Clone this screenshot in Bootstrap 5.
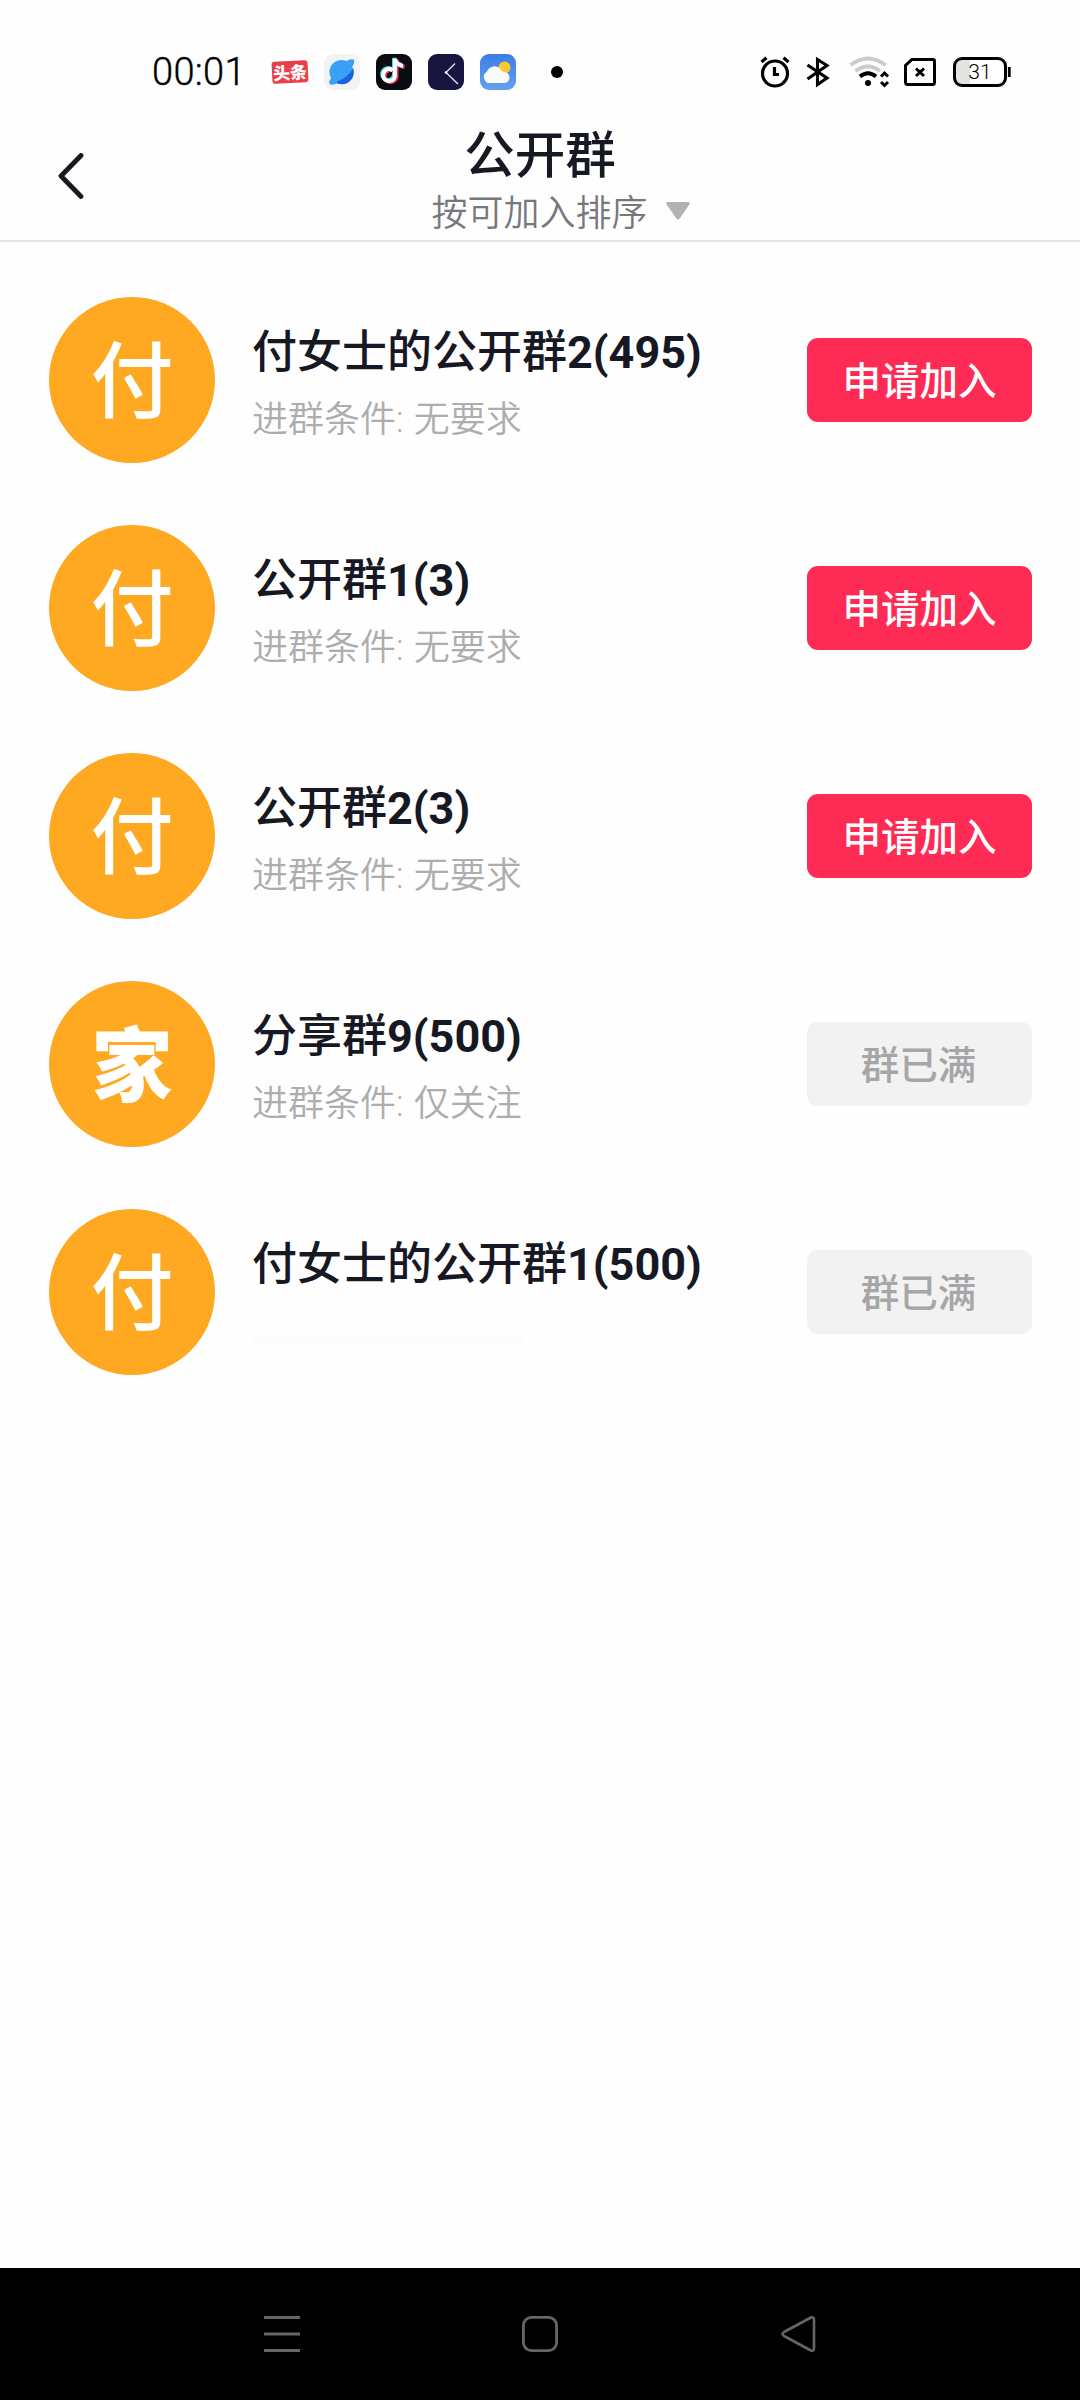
<!DOCTYPE html>
<html lang="zh-CN">
<head>
<meta charset="utf-8">
<meta name="viewport" content="width=device-width, initial-scale=1">
<title>公开群</title>
<link href="https://cdn.jsdelivr.net/npm/bootstrap@5.3.0/dist/css/bootstrap.min.css" rel="stylesheet">
<style>
  body { font-family: Roboto, "Noto Sans CJK SC", sans-serif; color: #161823; background: #fefefe; }
  svg { display: block; flex: none; }
  .phone { width: 1080px; height: 2400px; overflow: hidden; }
  .status-bar { height: 110px; padding: 54px 69px 0 152px; }
  .status-bar > div { height: 36px; }
  .clock { width: 94px; margin-right: 26px; font: 300 38px/38px Roboto, sans-serif; letter-spacing: .3px; -webkit-text-stroke: .4px #000; color: #000; white-space: nowrap; }
  .apps { gap: 16px; }
  .news-tile { width: 36px; height: 22px; border-radius: 3px; background: #e8404a; color: #fff; font: 900 17px/22px "Noto Sans CJK SC", sans-serif; transform: rotate(-3deg); }
  .dot { margin-left: 35px; }
  .title-bar { height: 132px; border-bottom: 2px solid #e3e3e4; display: grid; grid-template-columns: 1fr auto 1fr; }
  .back-btn { margin: 43px 0 0 56px; }
  .page-title { font-size: 50.500px; line-height: 60px; font-weight: 500; margin-top: 16px; }
  .sort-btn { font-size: 36px; line-height: 40px; font-weight: 350; color: #77787c; margin-top: 8px; height: 40px; padding-left: 42px; }
  .sort-btn svg { margin: -6px 0 0 17px; }
  .group-list { padding-top: 24px; }
  .group-item { height: 228px; padding: 0 48px 0 49px; background: transparent; }
  .avatar { width: 166px; height: 166px; padding-top: 4px; background: #ffa922; color: #fff; font-size: 83px; line-height: 1; font-weight: 500; flex: none; }
  .avatar.heavy { font-weight: 900; font-size: 81px; padding-top: 6px; }
  .info { margin-left: 37px; height: 130px; padding-top: 5px; }
  .group-name { font-size: 45px; line-height: 66px; font-weight: 500; white-space: nowrap; }
  .group-name b { font-weight: 700; }
  .rule { font-size: 36px; line-height: 54px; font-weight: 350; word-spacing: 1.500px; color: #adadae; margin-top: 7px; white-space: nowrap; }
  .faded-rule { width: 272px; height: 36px; margin-top: 12px; background: linear-gradient(#fefefe, #fcfcfc); }
  .join-btn { width: 225px; height: 84px; border: 0; border-radius: 11px; font-size: 38.500px; line-height: 80px; font-weight: 500; padding: 4px 0 0; color: #fff; background: #fe2c55; }
  .join-btn.full, .join-btn.full:disabled { background: #f2f2f2; color: #a6a6a8; opacity: 1; padding-right: 2px; }
  .nav-keys { height: 132px; padding: 0 262px; background: #000; }
</style>
<script src="https://cdn.jsdelivr.net/npm/bootstrap@5.3.0/dist/js/bootstrap.bundle.min.js"></script>
</head>
<body>
<div class="phone d-flex flex-column">
  <header class="status-bar d-flex justify-content-between">
    <div class="d-flex align-items-center">
      <div class="clock">00:01</div>
      <div class="apps d-flex align-items-center">
        <div class="news-tile d-flex justify-content-center">头条</div>
        <svg width="36" height="36" viewBox="0 0 36 36"><rect width="36" height="36" rx="9" fill="#f1f3f5"/><circle cx="17.500" cy="18" r="12" fill="#39a0f6"/><path d="M29.200 14.500A12 12 0 0 1 11 28.200Q23 25 29.200 14.500Z" fill="#1f5fe0"/><path d="M22 7Q28 4 30 6Q31 9 28 13M8 23Q4 28 5.500 30Q8 32 14 29" fill="#39a0f6"/></svg>
        <svg width="36" height="36" viewBox="0 0 36 36"><rect width="36" height="36" rx="9" fill="#0b0b14"/><g fill="none" stroke-width="4"><path d="M17 16.500A6 6 0 1 0 19 22V5Q20.500 11 27 12" stroke="#35e7e4" transform="translate(-1 -1)"/><path d="M17 16.500A6 6 0 1 0 19 22V5Q20.500 11 27 12" stroke="#fb3958" transform="translate(1.500 1)"/><path d="M17 16.500A6 6 0 1 0 19 22V5Q20.500 11 27 12" stroke="#fff"/></g></svg>
        <svg width="36" height="36" viewBox="0 0 36 36"><rect width="36" height="36" rx="9" fill="#181640"/><path d="M27 9.500L18 18.500L30 30" fill="none" stroke="#e6e6ee" stroke-width="1.300"/><circle cx="18" cy="18.500" r="1.300" fill="#fff"/></svg>
        <svg width="36" height="36" viewBox="0 0 36 36"><defs><linearGradient id="sky" x2="0" y2="1"><stop stop-color="#3b7de6"/><stop offset="1" stop-color="#62a2f0"/></linearGradient></defs><rect width="36" height="36" rx="9" fill="url(#sky)"/><circle cx="24.500" cy="13.500" r="6" fill="#fbc831"/><path d="M11 29A6.200 6.200 0 0 1 7 17.500A8 8 0 0 1 20.500 15Q22 18 24 18A5.500 5.500 0 0 1 24 29Z" fill="#fafafa"/></svg>
      </div>
      <svg class="dot" width="12" height="12" viewBox="0 0 12 12"><circle cx="6" cy="6" r="6"/></svg>
    </div>
    <div class="d-flex align-items-center">
      <svg width="30" height="32" viewBox="0 0 30 32" fill="none" stroke="#000" stroke-width="3.200"><circle cx="15" cy="17.500" r="12.500"/><path d="M14.500 11V18.500H19M1.500 6L6.500 1.800M28.500 6L23.500 1.800"/></svg>
      <svg class="ms-3" width="24" height="32" viewBox="0 0 24 32" fill="none" stroke="#000" stroke-width="3.100"><path d="M1.500 9L21 22L11.500 28.500V3.500L21 9.500L1.500 23"/></svg>
      <svg width="60" height="32" viewBox="-19 0 60 32" fill="none"><path d="M1.500 9Q19 -4 36.500 9M6.500 15Q19 6 31 15" stroke="#cbcbcb" stroke-width="4"/><path d="M11 20.500Q19 14 27 20.500" stroke="#000" stroke-width="4"/><circle cx="19" cy="27" r="3" fill="#000"/><path d="M32 20.500L35.500 17L39 20.500M32 26L35.500 29.500L39 26" stroke="#000" stroke-width="3"/></svg>
      <svg width="46" height="30" viewBox="-14 0 46 30" fill="none" stroke="#000" stroke-width="3"><path d="M8 2.400H29Q30.500 2.400 30.500 4V25Q30.500 27.500 29 27.500H3.500Q1.500 27.500 1.500 25V8.500Z"/><path d="M12 11.500L20 19M20 11.500L12 19"/></svg>
      <svg width="75" height="30" viewBox="-17 0 75 30"><rect x="1.500" y="1.500" width="51" height="27" rx="7.500" fill="#fff"/><path d="M17 2H9Q2 2 2 9V21Q2 28 9 28H17Z" fill="#e4e4e4"/><rect x="1.500" y="1.500" width="51" height="27" rx="7.500" fill="none" stroke="#000" stroke-width="3"/><path d="M56.300 10V20" stroke="#000" stroke-width="2.800"/><text x="27" y="22" font-family="Roboto, sans-serif" font-weight="300" font-size="21" text-anchor="middle">31</text></svg>
    </div>
  </header>

  <div class="title-bar">
    <a href="#" class="back-btn"><svg width="30" height="50" viewBox="0 0 30 50" fill="none" stroke="#161823" stroke-width="4.800" stroke-linecap="round" stroke-linejoin="round"><path d="M25 2.500L5 23L25 43.500"/></svg></a>
    <div class="text-center">
      <h1 class="page-title mb-0">公开群</h1>
      <div class="sort-btn d-flex justify-content-center align-items-center"><span>按可加入排序</span><svg width="26" height="20" viewBox="0 0 26 20"><path d="M3 1H23Q26 1 24 4L15 17Q13 20 11 17L2 4Q0 1 3 1Z" fill="#b2b2b6"/></svg></div>
    </div>
    <div></div>
  </div>

  <main class="group-list list-group list-group-flush flex-grow-1">
    <div class="group-item d-flex align-items-center">
      <div class="avatar rounded-circle d-flex align-items-center justify-content-center">付</div>
      <div class="info"><div class="group-name">付女士的公开群<b>2(495)</b></div><div class="rule">进群条件: 无要求</div></div>
      <button class="btn join-btn ms-auto">申请加入</button>
    </div>
    <div class="group-item d-flex align-items-center">
      <div class="avatar rounded-circle d-flex align-items-center justify-content-center">付</div>
      <div class="info"><div class="group-name">公开群<b>1(3)</b></div><div class="rule">进群条件: 无要求</div></div>
      <button class="btn join-btn ms-auto">申请加入</button>
    </div>
    <div class="group-item d-flex align-items-center">
      <div class="avatar rounded-circle d-flex align-items-center justify-content-center">付</div>
      <div class="info"><div class="group-name">公开群<b>2(3)</b></div><div class="rule">进群条件: 无要求</div></div>
      <button class="btn join-btn ms-auto">申请加入</button>
    </div>
    <div class="group-item d-flex align-items-center">
      <div class="avatar heavy rounded-circle d-flex align-items-center justify-content-center">家</div>
      <div class="info"><div class="group-name">分享群<b>9(500)</b></div><div class="rule">进群条件: 仅关注</div></div>
      <button class="btn join-btn full ms-auto" disabled>群已满</button>
    </div>
    <div class="group-item d-flex align-items-center">
      <div class="avatar rounded-circle d-flex align-items-center justify-content-center">付</div>
      <div class="info"><div class="group-name">付女士的公开群<b>1(500)</b></div><div class="faded-rule"></div></div>
      <button class="btn join-btn full ms-auto" disabled>群已满</button>
    </div>
  </main>

  <footer class="nav-keys d-flex align-items-center justify-content-between">
    <svg width="40" height="40" viewBox="0 0 40 40" stroke="#666" stroke-width="3"><path d="M2 3.500H38M2 20H38M2 36.500H38"/></svg>
    <svg width="40" height="40" viewBox="0 0 40 40" fill="none" stroke="#666" stroke-width="2.800"><rect x="3.400" y="3.400" width="33.200" height="33.200" rx="8"/></svg>
    <svg width="40" height="40" viewBox="-2 0 40 40" fill="none" stroke="#666" stroke-width="2.600" stroke-linejoin="round"><path d="M4 18L31 3.500Q34 2.500 34 5.500V34.500Q34 37.500 31 36.500L4 22Q1 20 4 18Z"/></svg>
  </footer>
</div>
</body>
</html>
